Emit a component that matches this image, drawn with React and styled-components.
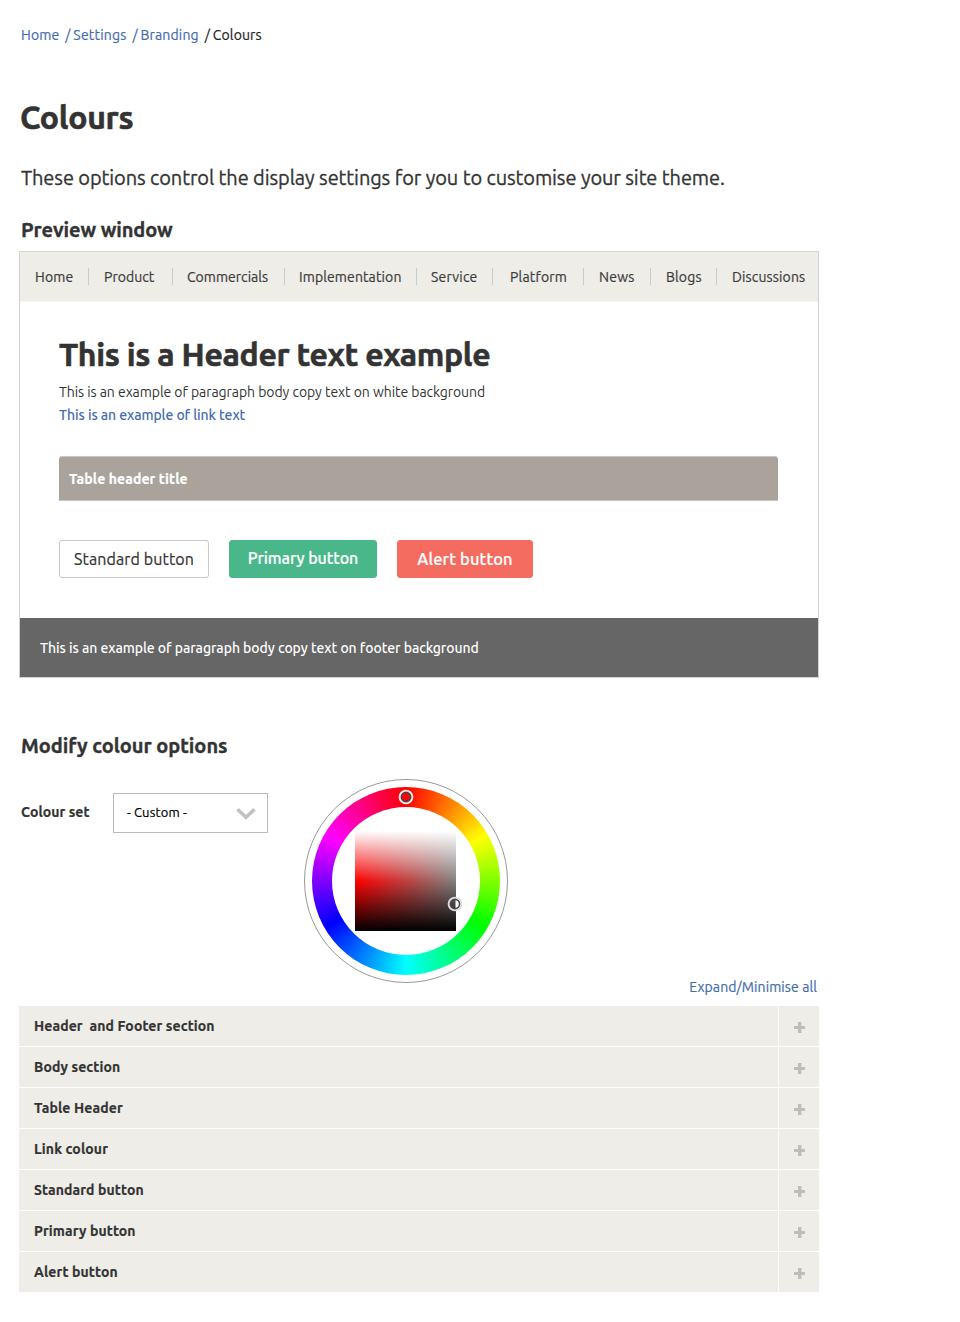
import React from "react";
import styled, { createGlobalStyle } from "styled-components";

const GlobalStyle = createGlobalStyle`
  *, *::before, *::after { box-sizing: border-box; }
  body {
    margin: 0;
    background: #fff;
    color: #333;
    font-family: Ubuntu, "Noto Sans", "Open Sans", sans-serif;
    font-size: 14px;
    -webkit-text-stroke: 0.2px currentColor;
  }
  h1, h2, p { margin: 0; }
`;

const Page = styled.main`
  width: 800px;
  margin-left: 19px;
  padding: 25px 0 30px;
`;

const Breadcrumbs = styled.nav`
  display: flex;
  height: 20px;
  padding-left: 2px;
  line-height: 20px;
`;

const Crumb = styled.a`
  color: ${(p) => (p.$current ? "#222" : "#436caf")};
  letter-spacing: ${(p) => p.$track}px;
  text-decoration: none;

  &:not(:first-child)::before {
    content: "/";
    display: inline-block;
    width: 8px;
    margin-left: 6px;
    letter-spacing: 0;
  }
`;

const Title = styled.h1`
  margin-top: 52px;
  padding-left: 1px;
  font-size: 32px;
  line-height: 40px;
  letter-spacing: -0.3px;
  -webkit-text-stroke: 0.6px currentColor;
`;

const Lead = styled.p`
  margin-top: 26px;
  padding-left: 2px;
  font-size: 20px;
  line-height: 30px;
  letter-spacing: -0.095px;
  white-space: nowrap;
  -webkit-text-stroke: 0.3px currentColor;
`;

const SectionTitle = styled.h2`
  margin-top: ${(p) => p.$top}px;
  padding-left: 2px;
  font-size: 20px;
  line-height: 26px;
  letter-spacing: ${(p) => p.$track}px;
  -webkit-text-stroke: 0.35px currentColor;
`;

const Preview = styled.section`
  margin-top: 8px;
  border: 1px solid #d3d3d1;
`;

const SiteNav = styled.nav`
  display: flex;
  align-items: center;
  height: 50px;
  background: #eeede8;
  border-bottom: 1px solid #f6f6f3;
`;

const NavItem = styled.a`
  width: ${(p) => p.$width}px;
  height: 17px;
  padding-left: ${(p) => p.$pad}px;
  color: #3b3b3b;
  line-height: 18px;
  letter-spacing: ${(p) => p.$track}px;
  white-space: nowrap;

  &:not(:last-child) { border-right: 1px solid #cbcac6; }
`;

const PreviewBody = styled.div`
  padding: 32px 40px 40px 39px;
`;

const SampleHeader = styled.p`
  font-size: 32px;
  font-weight: 700;
  line-height: 40px;
  letter-spacing: -0.344px;
  -webkit-text-stroke: 0.6px currentColor;
`;

const SampleText = styled.p`
  margin-top: 7px;
  line-height: 23px;
  letter-spacing: -0.053px;
  -webkit-text-stroke: 0;
`;

const SampleLink = styled.a`
  display: block;
  color: #436caf;
  font-weight: 500;
  line-height: 23px;
  letter-spacing: -0.085px;
  -webkit-text-stroke: 0;
`;

const TableHeader = styled.div`
  height: 45px;
  margin-top: 29px;
  padding-left: 10px;
  border: solid #c9c6c1;
  border-width: 1px 0;
  border-radius: 3px 3px 0 0;
  background: #a9a39b;
  color: #fff;
  font-weight: 700;
  line-height: 45px;
  letter-spacing: 0.108px;
`;

const Buttons = styled.div`
  display: flex;
  gap: 20px;
  margin-top: 39px;
`;

const variants = {
  standard: { bg: "#fff", edge: "#c8c8c8", text: "#333", weight: 400, size: 16 },
  primary: { bg: "#4ab78b", edge: "#4ab78b", text: "#fff", weight: 500, size: 16 },
  alert: { bg: "#f46c60", edge: "#f46c60", text: "#fff", weight: 500, size: 16.5 },
};

const Button = styled.button`
  width: ${(p) => p.$width}px;
  height: 38px;
  padding: ${(p) => (p.$variant === "primary" ? "0 0 2px" : "0")};
  border: 1px solid ${(p) => variants[p.$variant].edge};
  border-radius: 3px;
  background: ${(p) => variants[p.$variant].bg};
  color: ${(p) => variants[p.$variant].text};
  font-family: inherit;
  font-size: ${(p) => variants[p.$variant].size}px;
  font-weight: ${(p) => variants[p.$variant].weight};
  letter-spacing: ${(p) => p.$track}px;
  white-space: nowrap;
`;

const PreviewFooter = styled.footer`
  height: 59px;
  padding-left: 20px;
  background: #666;
  color: #fff;
  font-weight: 500;
  line-height: 60px;
  letter-spacing: -0.064px;
  -webkit-text-stroke: 0;
`;

const Options = styled.div`
  display: flex;
  height: 218px;
  margin-top: 20px;
`;

const FieldLabel = styled.label`
  width: 94px;
  padding: 14px 0 0 2px;
  font-weight: 700;
  line-height: 38px;
  letter-spacing: 0.07px;
`;

const Select = styled.div`
  display: flex;
  align-items: center;
  justify-content: space-between;
  width: 155px;
  height: 40px;
  margin-top: 14px;
  padding: 0 11px 0 13px;
  border: 1px solid #bbb;
  color: #000;
  font-size: 13px;
  letter-spacing: 0.17px;
  line-height: 36px;
  white-space: pre;

  span { margin-top: -2px; }
`;

const Chevron = styled.svg`
  display: block;
  width: 20px;
  height: 13px;
  margin-top: 1px;
`;

const Wheel = styled.div`
  position: relative;
  display: flex;
  align-items: center;
  justify-content: center;
  width: 204px;
  height: 204px;
  margin-left: 36px;
  border: 1px solid #999;
  border-radius: 50%;
`;

const HueRing = styled.div`
  display: flex;
  align-items: center;
  justify-content: center;
  width: 188px;
  height: 188px;
  border-radius: 50%;
  background: conic-gradient(#f00, #ff0 60deg, #0f0 120deg, #0ff 180deg, #00f 240deg, #f0f 300deg, #f00);

  &::before {
    content: "";
    width: 148px;
    height: 148px;
    border-radius: 50%;
    background: #fff;
  }
`;

const ShadeSquare = styled.div`
  position: absolute;
  left: 50px;
  top: 51px;
  width: 101px;
  height: 100px;
  background:
    linear-gradient(#fff, rgba(255, 255, 255, 0) 50%, rgba(0, 0, 0, 0) 50%, #000),
    linear-gradient(to right, #f00, #808080);
`;

const Marker = styled.svg`
  position: absolute;
  left: ${(p) => p.$x - 8}px;
  top: ${(p) => p.$y - 8}px;
  width: 16px;
  height: 16px;
`;

const ExpandAll = styled.a`
  align-self: flex-end;
  margin: 0 2px 0 auto;
  color: #436caf;
  line-height: 20px;
  letter-spacing: 0.1px;
`;

const Accordion = styled.div`
  display: grid;
  gap: 1px;
  margin-top: 9px;
`;

const Row = styled.div`
  display: grid;
  grid-template-columns: 759px 40px;
  gap: 1px;
  height: 40px;
`;

const RowTitle = styled.div`
  padding-left: 15px;
  background: #eeede8;
  font-weight: 700;
  line-height: 40px;
  letter-spacing: ${(p) => p.$track}px;
  white-space: pre;
`;

const RowToggle = styled.div`
  display: flex;
  align-items: center;
  justify-content: center;
  padding-top: 3px;
  padding-left: ${(p) => (p.$first ? 0 : 1)}px;
  background: #eeede8;
`;

const navItems = [
  ["Home", 69, 15, 0.15],
  ["Product", 84, 15, 0.04],
  ["Commercials", 112, 14, 0.03],
  ["Implementation", 132, 14, 0.12],
  ["Service", 76, 14, 0.2],
  ["Platform", 91, 17, 0.18],
  ["News", 67, 15, 0.25],
  ["Blogs", 66, 15, 0.15],
  ["Discussions", 101, 15, 0.15],
];

const sections = [
  ["Header  and Footer section", 0.11],
  ["Body section", 0.12],
  ["Table Header", 0.15],
  ["Link colour", 0.13],
  ["Standard button", 0.125],
  ["Primary button", 0.11],
  ["Alert button", 0.13],
];

function Plus() {
  return (
    <svg width="11" height="11" viewBox="0 0 11 11">
      <path d="M4 0h3.4v4H11v3H7.4v4H4V7H0V4h4z" fill="#bebdbc" />
    </svg>
  );
}

export default function App() {
  return (
    <>
      <GlobalStyle />
      <Page>
        <Breadcrumbs>
          <Crumb $track={0.15}>Home</Crumb>
          <Crumb $track={0.18}>Settings</Crumb>
          <Crumb $track={0.18}>Branding</Crumb>
          <Crumb $current $track={0.12}>Colours</Crumb>
        </Breadcrumbs>
        <Title>Colours</Title>
        <Lead>These options control the display settings for you to customise your site theme.</Lead>
        <SectionTitle $top={24} $track={-0.088}>Preview window</SectionTitle>

        <Preview>
          <SiteNav>
            {navItems.map(([name, width, pad, track]) => (
              <NavItem key={name} $width={width} $pad={pad} $track={track}>{name}</NavItem>
            ))}
          </SiteNav>
          <PreviewBody>
            <SampleHeader>This is a Header text example</SampleHeader>
            <SampleText>This is an example of paragraph body copy text on white background</SampleText>
            <SampleLink>This is an example of link text</SampleLink>
            <TableHeader>Table header title</TableHeader>
            <Buttons>
              <Button $variant="standard" $width={150} $track={0.12}>Standard button</Button>
              <Button $variant="primary" $width={148} $track={-0.06}>Primary button</Button>
              <Button $variant="alert" $width={136} $track={0.12}>Alert button</Button>
            </Buttons>
          </PreviewBody>
          <PreviewFooter>This is an example of paragraph body copy text on footer background</PreviewFooter>
        </Preview>

        <SectionTitle $top={55} $track={-0.03}>Modify colour options</SectionTitle>
        <Options>
          <FieldLabel>Colour set</FieldLabel>
          <Select>
            <span>- Custom -</span>
            <Chevron viewBox="0 0 20 13">
              <path d="M1.5 2.2 10 10.2 18.5 2.2" fill="none" stroke="#bfc1c3" strokeWidth="3.6" />
            </Chevron>
          </Select>
          <Wheel>
            <HueRing />
            <ShadeSquare />
            <Marker $x={101} $y={17} viewBox="0 0 16 16">
              <circle cx="8" cy="8" r="4.7" fill="none" stroke="#444" strokeWidth="1.8" />
              <circle cx="8" cy="8" r="6.4" fill="none" stroke="#eee" strokeWidth="1.9" />
            </Marker>
            <Marker $x={150} $y={123.7} viewBox="0 0 16 16">
              <path d="M8.5 4a4 4 0 0 1 0 8z" fill="#fff" />
              <circle cx="8" cy="8" r="4.7" fill="none" stroke="#444" strokeWidth="1.8" />
              <circle cx="8" cy="8" r="6.4" fill="none" stroke="#ddd" strokeWidth="1.9" />
            </Marker>
          </Wheel>
          <ExpandAll>Expand/Minimise all</ExpandAll>
        </Options>

        <Accordion>
          {sections.map(([name, track], i) => (
            <Row key={name}>
              <RowTitle $track={track}>{name}</RowTitle>
              <RowToggle $first={i === 0}><Plus /></RowToggle>
            </Row>
          ))}
        </Accordion>
      </Page>
    </>
  );
}
